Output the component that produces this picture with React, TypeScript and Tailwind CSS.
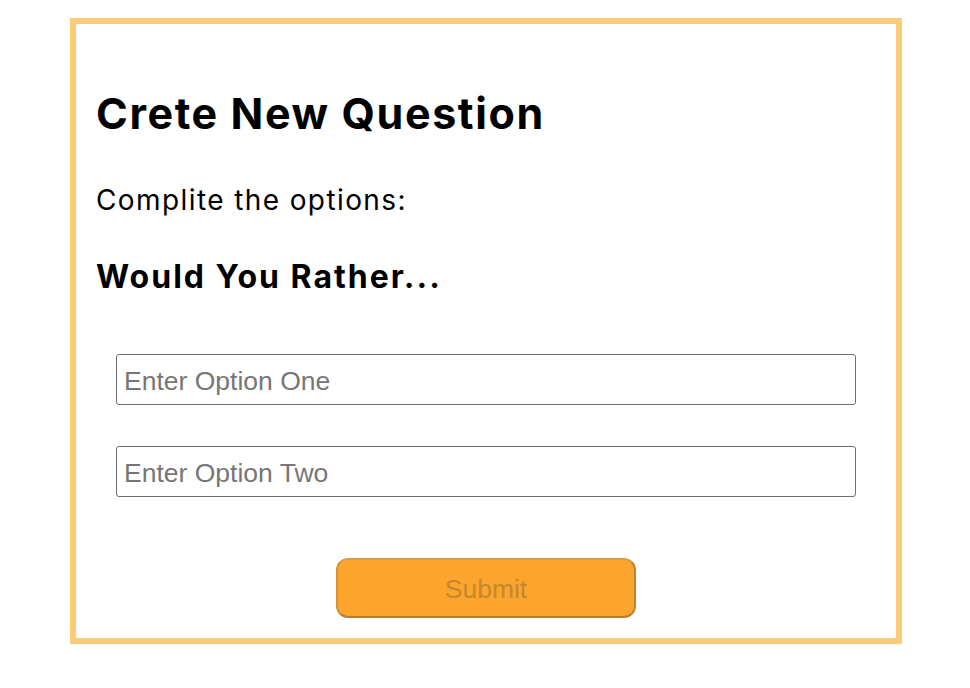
import React from "react";

export default function App() {
  return (
    <div className="min-h-screen bg-white pt-[18px]">
      <div className="ml-[70px] w-[832px] border-[6px] border-[#fdcb78] px-5 pb-5 font-['Inter',sans-serif] text-black">
        <h1 className="mt-[65px] text-[43px] font-bold leading-[48px] tracking-[1.6px]">
          Crete New Question
        </h1>
        <p className="mt-[46px] text-[28px] leading-[34px] tracking-[1.4px]">
          Complite the options:
        </p>
        <h2 className="mt-[41px] text-[32px] font-bold leading-[38px] tracking-[2px]">
          Would You Rather...
        </h2>
        <form className="flex flex-col" onSubmit={(e) => e.preventDefault()}>
          <input
            type="text"
            placeholder="Enter Option One"
            className="mx-5 mt-[58px] h-[51px] rounded-[3px] border-[1.5px] border-[#6f6f6f] px-[7px] pt-[3px] font-['Liberation_Sans',Arial,sans-serif] text-[26.5px] placeholder:text-[#767676] outline-none"
          />
          <input
            type="text"
            placeholder="Enter Option Two"
            className="mx-5 mt-[41px] h-[51px] rounded-[3px] border-[1.5px] border-[#6f6f6f] px-[7px] pt-[3px] font-['Liberation_Sans',Arial,sans-serif] text-[26.5px] placeholder:text-[#767676] outline-none"
          />
          <div className="mt-[61px] flex justify-center">
            <button
              type="submit"
              disabled
              className="h-[60px] w-[300px] rounded-[12px] border-[2.5px] border-t-[#d99b45] border-l-[#d4943f] border-r-[#c08430] border-b-[#b97d2c] bg-[#fca42b] pt-[3px] font-['Liberation_Sans',Arial,sans-serif] text-[26.5px] text-[#c4882f]"
            >
              Submit
            </button>
          </div>
        </form>
      </div>
    </div>
  );
}
